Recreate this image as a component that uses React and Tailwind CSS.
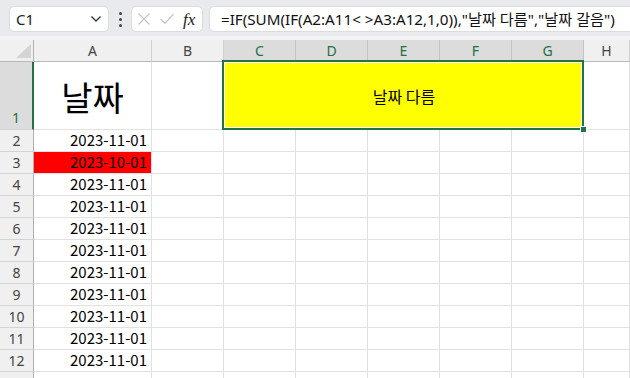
import React from "react";

const FONT = { fontFamily: '"Noto Sans", "Noto Sans CJK KR", sans-serif' };
const CELLFONT = { fontFamily: '"Noto Sans CJK KR", "Noto Sans", sans-serif' };

function HeaderCell({ children, selected }) {
  return (
    <div
      className={
        "flex items-center justify-center border-r border-b text-[14px] " +
        (selected
          ? "bg-[#dcdcdc] border-r-[#c4c4c4] border-b-[#217346] text-[#1e7045]"
          : "bg-[#f0f0f0] border-r-[#d0d0d0] border-b-[#b8b8b8] text-[#444444]")
      }
    >
      {children}
    </div>
  );
}

function RowHead({ n }) {
  return (
    <div className="flex items-center justify-center bg-[#f0f0f0] border-r border-r-[#b0b0b0] border-b border-b-[#d4d4d4] text-[14px] text-[#444444]">
      {n}
    </div>
  );
}

function Cell({ children, red }) {
  return (
    <div
      className={
        "flex items-center justify-end pr-[4px] border-r border-b border-[#e1e1e1] text-[15px] text-black " +
        (red ? "bg-[#ff0000]" : "bg-white")
      }
      style={CELLFONT}
    >
      {children}
    </div>
  );
}

function Empty() {
  return <div className="border-r border-b border-[#e1e1e1] bg-white" />;
}

export default function App() {
  const rows = [];
  for (let r = 2; r <= 13; r++) {
    const date = r === 13 ? "" : r === 3 ? "2023-10-01" : "2023-11-01";
    rows.push(
      <React.Fragment key={r}>
        <RowHead n={r === 13 ? "" : r} />
        <Cell red={r === 3}>{date}</Cell>
        <Empty />
        <Empty />
        <Empty />
        <Empty />
        <Empty />
        <Empty />
        <Empty />
      </React.Fragment>
    );
  }

  return (
    <div className="relative w-[630px] h-[378px] overflow-hidden bg-white" style={FONT}>
      {/* toolbar */}
      <div className="h-[36px] bg-[#e8eaed] flex items-start pt-[6px] pl-[9px]">
        <div className="w-[100px] h-[26px] bg-white rounded-[5px] border border-[#dcdcdc] flex items-center pl-[6px] pr-[6px]">
          <span className="text-[15px] text-[#222] flex-1">C1</span>
          <svg width="12" height="8" viewBox="0 0 12 8">
            <path d="M1.5 1.5 L6 6 L10.5 1.5" fill="none" stroke="#333" strokeWidth="1.3" />
          </svg>
        </div>
        <div className="w-[22px] h-[26px] flex flex-col items-center justify-center gap-[3px]">
          <div className="w-[3px] h-[3px] rounded-full bg-[#444]" />
          <div className="w-[3px] h-[3px] rounded-full bg-[#444]" />
          <div className="w-[3px] h-[3px] rounded-full bg-[#444]" />
        </div>
        <div className="w-[72px] h-[26px] bg-white rounded-[5px] border border-[#dcdcdc] flex items-center pl-[5px]">
          <svg width="14" height="14" viewBox="0 0 14 14">
            <path d="M1.5 1.5 L12.5 12.5 M12.5 1.5 L1.5 12.5" stroke="#c4c4c4" strokeWidth="1.2" fill="none" />
          </svg>
          <svg width="16" height="14" viewBox="0 0 16 14" className="ml-[8px]">
            <path d="M1.5 7 L6 11.5 L14.5 2" stroke="#c4c4c4" strokeWidth="1.2" fill="none" />
          </svg>
          <span
            className="ml-[8px] text-[17px] italic text-[#222] leading-none"
            style={{ fontFamily: '"Liberation Serif", serif' }}
          >
            fx
          </span>
        </div>
        <div className="ml-[6px] flex-1 -mr-[10px] h-[26px] bg-white rounded-[5px] border border-[#dcdcdc] flex items-center pl-[11px]">
          <span className="text-[15.2px] text-[#111] whitespace-nowrap">
            =IF(SUM(IF(A2:A11&lt; &gt;A3:A12,1,0)),"날짜 다름","날짜 갈음")
          </span>
        </div>
      </div>
      <div className="h-[4px] bg-[#f3f3f3]" />

      {/* grid */}
      <div className="grid grid-cols-[34px_118px_72px_72px_72px_72px_72px_72px_1fr] grid-rows-[22px_68px] auto-rows-[22px]">
        {/* header row */}
        <div className="relative bg-[#f0f0f0] border-r border-r-[#b0b0b0] border-b border-b-[#b8b8b8]">
          <svg className="absolute left-[16px] top-[4px]" width="15" height="14" viewBox="0 0 15 14">
            <polygon points="15,0 15,14 0,14" fill="#d4d4d4" />
          </svg>
        </div>
        <HeaderCell>A</HeaderCell>
        <HeaderCell>B</HeaderCell>
        <HeaderCell selected>C</HeaderCell>
        <HeaderCell selected>D</HeaderCell>
        <HeaderCell selected>E</HeaderCell>
        <HeaderCell selected>F</HeaderCell>
        <HeaderCell selected>G</HeaderCell>
        <HeaderCell>H</HeaderCell>

        {/* row 1 */}
        <div className="flex items-end justify-center pb-[1px] bg-[#dcdcdc] border-r-2 border-r-[#217346] border-b border-b-[#d4d4d4] text-[14px] text-[#1e7045]">
          1
        </div>
        <div
          className="flex items-center justify-center border-r border-b border-[#e1e1e1] text-[34px] text-black pt-[2px]"
          style={CELLFONT}
        >
          날짜
        </div>
        <Empty />
        <div
          className="col-span-5 flex items-center justify-center bg-[#ffff00] border-b border-[#e1e1e1] text-[16px] text-black"
          style={CELLFONT}
        >
          날짜 다름
        </div>
        <Empty />

        {rows}
      </div>

      {/* selection overlay */}
      <div className="absolute left-[222px] top-[60px] w-[362px] h-[70px] border-2 border-[#217346] shadow-[inset_0_0_0_1px_#ffffff] pointer-events-none" />
      <div className="absolute left-[580px] top-[126px] w-[7px] h-[7px] bg-[#217346] border border-white" />
    </div>
  );
}
